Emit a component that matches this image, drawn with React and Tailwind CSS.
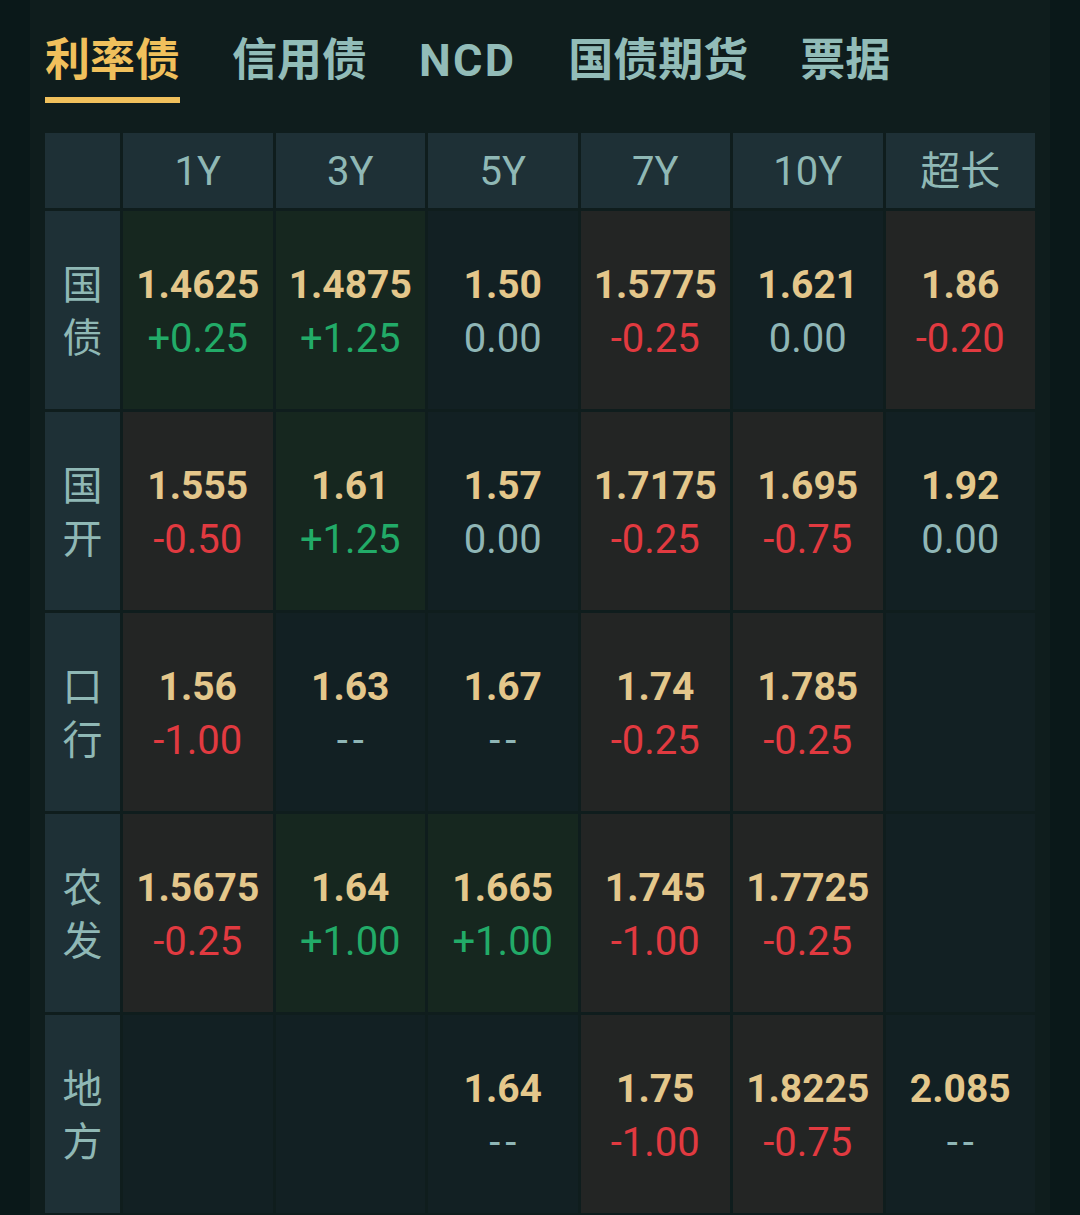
import React from "react";

const FONT = { fontFamily: "Roboto, 'Noto Sans CJK SC', sans-serif" };

const tabs = ["利率债", "信用债", "NCD", "国债期货", "票据"];
const cols = ["1Y", "3Y", "5Y", "7Y", "10Y", "超长"];

const rows = [
  {
    label: ["国", "债"],
    cells: [
      ["1.4625", "+0.25", "g"],
      ["1.4875", "+1.25", "g"],
      ["1.50", "0.00", "n"],
      ["1.5775", "-0.25", "r"],
      ["1.621", "0.00", "n"],
      ["1.86", "-0.20", "r"],
    ],
  },
  {
    label: ["国", "开"],
    cells: [
      ["1.555", "-0.50", "r"],
      ["1.61", "+1.25", "g"],
      ["1.57", "0.00", "n"],
      ["1.7175", "-0.25", "r"],
      ["1.695", "-0.75", "r"],
      ["1.92", "0.00", "n"],
    ],
  },
  {
    label: ["口", "行"],
    cells: [
      ["1.56", "-1.00", "r"],
      ["1.63", "--", "n"],
      ["1.67", "--", "n"],
      ["1.74", "-0.25", "r"],
      ["1.785", "-0.25", "r"],
      null,
    ],
  },
  {
    label: ["农", "发"],
    cells: [
      ["1.5675", "-0.25", "r"],
      ["1.64", "+1.00", "g"],
      ["1.665", "+1.00", "g"],
      ["1.745", "-1.00", "r"],
      ["1.7725", "-0.25", "r"],
      null,
    ],
  },
  {
    label: ["地", "方"],
    cells: [
      null,
      null,
      ["1.64", "--", "n"],
      ["1.75", "-1.00", "r"],
      ["1.8225", "-0.75", "r"],
      ["2.085", "--", "n"],
    ],
  },
];

function Cell({ data }) {
  if (!data) {
    return <div className="h-[198px] bg-[#122023]" />;
  }
  const [v, c, t] = data;
  const bg = t === "g" ? "bg-[#16271f]" : t === "r" ? "bg-[#232524]" : "bg-[#122023]";
  const color = t === "g" ? "text-[#22ab68]" : t === "r" ? "text-[#e13a40]" : "text-[#8fb6b6]";
  return (
    <div className={`h-[198px] ${bg} flex flex-col items-center justify-center pt-[4px]`}>
      <div className="text-[39px] leading-[53px] font-bold text-[#e4c78b]">{v}</div>
      <div className={`text-[40px] leading-[53px] ${color} ${c === "--" ? "tracking-[0.12em] pl-[0.12em]" : ""}`}>{c}</div>
    </div>
  );
}

export default function App() {
  return (
    <div className="w-full h-[1215px] bg-[#0a1819] overflow-hidden" style={FONT}>
      <div className="ml-[30px] w-[1020px] h-full bg-[#0f1d1d] px-[15px]">
        <div className="flex gap-[52px] pt-[37px]">
          {tabs.map((t, i) => (
            <div key={t} className="flex flex-col">
              <div
                className={`text-[45px] leading-[47px] font-bold ${i === 0 ? "text-[#f0c05c]" : "text-[#92bcb8]"} ${t === "NCD" ? "tracking-[0.05em]" : ""}`}
              >
                {t}
              </div>
              {i === 0 ? (
                <div className="mt-[13px] h-[6px] bg-[#f0c05c]" />
              ) : (
                <div className="mt-[13px] h-[6px]" />
              )}
            </div>
          ))}
        </div>
        <div className="mt-[30px] grid grid-cols-[75px_repeat(6,1fr)] gap-[3px]">
          <div className="h-[75px] bg-[#1e3036]" />
          {cols.map((c) => (
            <div
              key={c}
              className="h-[75px] bg-[#1e3036] flex items-center justify-center text-[40px] text-[#8fb8b5] pt-[3px]"
            >
              {c}
            </div>
          ))}
          {rows.map((r) => (
            <React.Fragment key={r.label.join("")}>
              <div className="h-[198px] bg-[#1e3036] flex flex-col items-center justify-center text-[40px] leading-[53px] text-[#8fb8b5] pt-[4px]">
                <div>{r.label[0]}</div>
                <div>{r.label[1]}</div>
              </div>
              {r.cells.map((c, i) => (
                <Cell key={i} data={c} />
              ))}
            </React.Fragment>
          ))}
        </div>
      </div>
    </div>
  );
}
